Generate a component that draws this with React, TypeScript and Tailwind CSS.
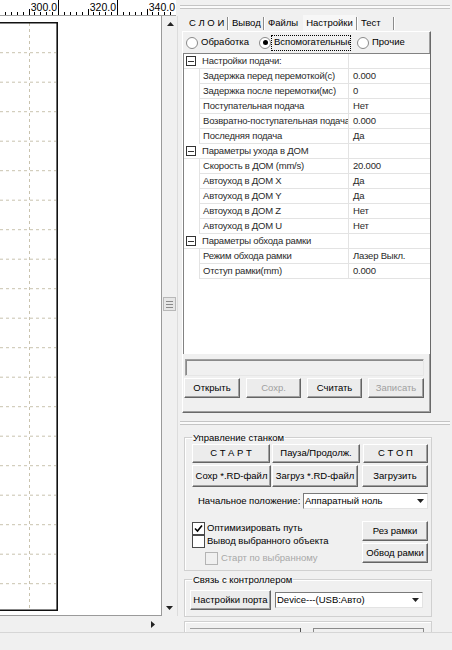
import React from "react";

const tree = [
  {
    title: "Настройки подачи:",
    rows: [
      ["Задержка перед перемоткой(с)", "0.000"],
      ["Задержка после перемотки(мс)", "0"],
      ["Поступательная подача", "Нет"],
      ["Возвратно-поступательная подача", "0.000"],
      ["Последняя подача", "Да"],
    ],
  },
  {
    title: "Параметры ухода в ДОМ",
    rows: [
      ["Скорость в ДОМ (mm/s)", "20.000"],
      ["Автоуход в ДОМ X", "Да"],
      ["Автоуход в ДОМ Y", "Да"],
      ["Автоуход в ДОМ Z", "Нет"],
      ["Автоуход в ДОМ U", "Нет"],
    ],
  },
  {
    title: "Параметры обхода рамки",
    rows: [
      ["Режим обхода рамки", "Лазер Выкл."],
      ["Отступ рамки(mm)", "0.000"],
    ],
  },
];

function Ruler() {
  const ticks = [];
  for (let v = 280; v <= 340; v += 2) {
    const x = Math.round(58 + (v - 300) * 2.95) + 0.5;
    const top = v % 20 === 0 ? 0 : v % 10 === 0 ? 9 : 12;
    ticks.push(
      <line key={v} x1={x} x2={x} y1={top} y2={16} stroke="#000" strokeWidth={1} />
    );
  }
  const labels = ["300.0", "320.0", "340.0"];
  return (
    <svg width="176" height="16" className="block bg-white">
      {ticks}
      {labels.map((l, i) => (
        <text
          key={l}
          x={57 + i * 59}
          y={11}
          textAnchor="end"
          fontSize="10.5"
          fontFamily="Liberation Sans, Arial, sans-serif"
          fill="#000"
          stroke="#fff"
          strokeWidth={2}
          paintOrder="stroke"
        >
          {l}
        </text>
      ))}
      <line x1={0} x2={176} y1={15.5} y2={15.5} stroke="#a0a0a0" />
    </svg>
  );
}

function Canvas() {
  const hLines = [];
  for (let k = 0; k <= 18; k++) {
    const y = 36.7 + k * 29.5;
    hLines.push(
      <line key={k} x1={0} x2={56} y1={y} y2={y} stroke="#c9c3ae" strokeDasharray="3 3" />
    );
  }
  return (
    <svg width="161" height="599" className="block">
      {hLines}
      <line x1={29.5} x2={29.5} y1={7} y2={594} stroke="#c9c3ae" strokeDasharray="3 3" />
      <path d="M0 6.8 H57.2 V594.2 H0" fill="none" stroke="#111" strokeWidth={1.6} />
    </svg>
  );
}

function Arrow({ dir }: { dir: "up" | "down" | "right" }) {
  const d =
    dir === "up" ? "M0 4 L3.5 0 L7 4 Z" : dir === "down" ? "M0 0 L7 0 L3.5 4 Z" : "M0 0 L4 3.5 L0 7 Z";
  const w = dir === "right" ? 4 : 7;
  const h = dir === "right" ? 7 : 4;
  return (
    <svg width={w} height={h} className="block">
      <path d={d} fill="#222" />
    </svg>
  );
}

function Btn({
  children,
  disabled,
  className = "",
}: {
  children: React.ReactNode;
  disabled?: boolean;
  className?: string;
}) {
  return (
    <div
      className={`shrink-0 flex items-center justify-center whitespace-nowrap border border-t-white border-l-white border-r-[#646464] border-b-[#646464] bg-[#ececec] shadow-[inset_-1px_-1px_0_#a0a0a0] ${
        disabled ? "text-[#a0a0a0]" : "text-black"
      } ${className}`}
    >
      {children}
    </div>
  );
}

function Combo({ text, className = "" }: { text: string; className?: string }) {
  return (
    <div
      className={`shrink-0 flex items-center bg-white border border-t-[#7a7a7a] border-l-[#7a7a7a] border-r-[#e3e3e3] border-b-[#e3e3e3] ${className}`}
    >
      <span className="flex-1 pl-[1px] whitespace-nowrap overflow-hidden">{text}</span>
      <div className="w-[14px] h-full flex items-center justify-center">
        <Arrow dir="down" />
      </div>
    </div>
  );
}

function Check({ checked, disabled }: { checked?: boolean; disabled?: boolean }) {
  return (
    <div
      className={`shrink-0 w-[13px] h-[13px] flex items-center justify-center border ${
        disabled ? "border-[#b4b4b4] bg-[#f0f0f0]" : "border-[#4a4a4a] bg-white"
      }`}
    >
      {checked && (
        <svg width="9" height="9" className="block">
          <path d="M1 4.5 L3.5 7 L8 1.5" fill="none" stroke="#000" strokeWidth={1.6} />
        </svg>
      )}
    </div>
  );
}

function Radio({ on }: { on?: boolean }) {
  return (
    <div className="w-[12px] h-[12px] rounded-full border border-[#8a8a8a] bg-white flex items-center justify-center shrink-0">
      {on && <div className="w-[5px] h-[5px] rounded-full bg-black" />}
    </div>
  );
}

function Sep() {
  return <div className="shrink-0 w-[2px] h-[13px] border-l border-[#8c8c8c] border-r border-r-white" />;
}

function LeftPane() {
  return (
    <div className="w-[178px] shrink-0 flex flex-col">
      <div className="h-[16px] shrink-0 flex">
        <Ruler />
      </div>
      <div className="flex flex-1">
        <div className="w-[162px] flex flex-col">
          <div className="flex-1 bg-white border-r border-b border-[#9a9a9a] overflow-hidden">
            <Canvas />
          </div>
          <div className="h-[16px] shrink-0 flex justify-end items-center pr-[7px]">
            <Arrow dir="right" />
          </div>
        </div>
        <div className="w-[16px] flex flex-col">
          <div className="flex-1 flex flex-col border-r border-[#dcdcdc]">
            <div className="h-[16px] shrink-0 flex items-center justify-center pl-[1px]">
              <Arrow dir="up" />
            </div>
            <div className="h-[265px] shrink-0" />
            <div className="h-[14px] shrink-0 mx-[1px] border border-[#b8b8b8] bg-[#e6e6e6] flex flex-col items-center justify-center gap-[2px]">
              <div className="w-[7px] h-[1px] bg-[#8a8a8a]" />
              <div className="w-[7px] h-[1px] bg-[#8a8a8a]" />
              <div className="w-[7px] h-[1px] bg-[#8a8a8a]" />
            </div>
            <div className="flex-1" />
            <div className="h-[16px] shrink-0 flex items-center justify-center">
              <Arrow dir="down" />
            </div>
          </div>
          <div className="h-[16px] shrink-0" />
        </div>
      </div>
    </div>
  );
}

function Tree() {
  return (
    <div className="shrink-0 h-[301px] bg-white border-t border-l border-[#828282] overflow-hidden text-[#2a2a2a] tracking-[-0.2px]">
      {tree.map((g) => (
        <div key={g.title}>
          <div className="flex h-[15px] border-b border-[#e3e3e3]">
            <div className="w-[15px] shrink-0 flex items-center pl-[2px]">
              <div className="w-[10px] h-[10px] border border-[#333] flex items-center justify-center">
                <div className="w-[6px] h-[1px] bg-[#333]" />
              </div>
            </div>
            <div className="w-[149px] shrink-0 pl-[3px] flex items-center whitespace-nowrap overflow-hidden">
              {g.title}
            </div>
            <div className="flex-1 border-l border-[#e3e3e3]" />
          </div>
          {g.rows.map(([label, value]) => (
            <div key={label} className="flex h-[15px]">
              <div className="w-[15px] shrink-0" />
              <div className="w-[149px] shrink-0 pl-[3px] flex items-center whitespace-nowrap overflow-hidden border-b border-l border-[#e3e3e3]">
                {label}
              </div>
              <div className="flex-1 pl-[4px] flex items-center whitespace-nowrap border-b border-l border-[#e3e3e3]">
                {value}
              </div>
            </div>
          ))}
        </div>
      ))}
    </div>
  );
}

function RightPane() {
  return (
    <div className="flex-1 flex flex-col overflow-hidden">
      {/* splitter */}
      <div className="shrink-0 h-[15px] pt-[5px] pl-[2px] pr-[2px]">
        <div className="h-[4px] border-y border-[#c4c4c4] bg-[#fafafa]" />
      </div>

      {/* tabs */}
      <div className="shrink-0 h-[16px] ml-[4px] flex items-center whitespace-nowrap">
        <span className="ml-[7px] w-[34px]">С Л О И</span>
        <div className="ml-[4px]">
          <Sep />
        </div>
        <span className="ml-[3px] w-[31px]">Вывод</span>
        <Sep />
        <span className="ml-[3px] w-[35px]">Файлы</span>
        <span className="w-[53px] h-[16px] flex items-center justify-center bg-[#f7f7f7]">Настройки</span>
        <Sep />
        <span className="ml-[3px] w-[32px]">Тест</span>
        <Sep />
      </div>

      {/* tab body */}
      <div className="shrink-0 ml-[4px] w-[249px] h-[382px] flex flex-col border border-t-white border-l-white border-r-[#696969] border-b-[#696969] shadow-[inset_-1px_-1px_0_#a0a0a0]">
        <div className="shrink-0 h-[21px] flex items-center">
          <div className="ml-[3px] w-[73px] shrink-0 flex items-center gap-[3px]">
            <Radio />
            <span>Обработка</span>
          </div>
          <Radio on />
          <div className="shrink-0 w-[80px] h-[16px] border border-dotted border-black flex items-center pl-[2px] whitespace-nowrap overflow-hidden">
            Вспомогательные
          </div>
          <div className="ml-[6px] flex items-center gap-[3px]">
            <Radio />
            <span>Прочие</span>
          </div>
        </div>
        <Tree />
        <div className="shrink-0 mt-[5px] ml-[2px] w-[239px] h-[17px] bg-[#f0f0f0] border border-t-[#a0a0a0] border-l-[#a0a0a0] border-r-[#e6e6e6] border-b-[#e6e6e6] shadow-[inset_1px_1px_0_#8a8a8a]" />
        <div className="shrink-0 mt-[2px] ml-[1px] flex gap-[6px]">
          <Btn className="w-[56px] h-[20px]">Открыть</Btn>
          <Btn disabled className="w-[55px] h-[20px]">Сохр.</Btn>
          <Btn className="w-[55px] h-[20px]">Считать</Btn>
          <Btn disabled className="w-[56px] h-[20px]">Записать</Btn>
        </div>
      </div>

      {/* splitter */}
      <div className="shrink-0 mt-[8px] mx-[2px] h-[4px] border-y border-[#c4c4c4] bg-[#fafafa]" />

      {/* machine control */}
      <fieldset className="shrink-0 mt-[6px] ml-[6px] w-[248px] border border-[#d0d0d0] shadow-[inset_1px_1px_0_#fff] pl-[7px] pr-[3px] pb-[5px]">
        <legend className="px-[1px] leading-[13px]">Управление станком</legend>
        <div className="flex h-[19px]">
          <Btn className="w-[78px]">С Т А Р Т</Btn>
          <Btn className="ml-[2px] w-[88px]">Пауза/Продолж.</Btn>
          <Btn className="ml-[3px] w-[65px]">С Т О П</Btn>
        </div>
        <div className="mt-[2px] flex h-[22px]">
          <Btn className="w-[79px]">Сохр *.RD-файл</Btn>
          <Btn className="ml-[1px] w-[86px]">Загруз *.RD-файл</Btn>
          <Btn className="ml-[4px] w-[66px]">Загрузить</Btn>
        </div>
        <div className="mt-[6px] flex items-center h-[16px]">
          <span className="ml-[6px] w-[105px] shrink-0 whitespace-nowrap">Начальное положение:</span>
          <Combo text="Аппаратный ноль" className="w-[125px] h-[16px]" />
        </div>
        <div className="mt-[12px] flex">
          <div className="flex-1 flex flex-col">
            <div className="mt-[1px] h-[13px] flex items-center gap-[2px]">
              <Check checked />
              <span className="whitespace-nowrap">Оптимизировать путь</span>
            </div>
            <div className="h-[13px] flex items-center gap-[2px]">
              <Check />
              <span className="whitespace-nowrap">Вывод выбранного объекта</span>
            </div>
            <div className="mt-[4px] ml-[13px] h-[13px] flex items-center gap-[3px]">
              <Check disabled />
              <span className="whitespace-nowrap text-[#a8a8a8]">Старт по выбранному</span>
            </div>
          </div>
          <div className="w-[66px] shrink-0 flex flex-col gap-[2px]">
            <Btn className="h-[20px]">Рез рамки</Btn>
            <Btn className="h-[20px]">Обвод рамки</Btn>
          </div>
        </div>
      </fieldset>

      {/* controller link */}
      <fieldset className="shrink-0 mt-[2px] ml-[6px] w-[248px] border border-[#d0d0d0] shadow-[inset_1px_1px_0_#fff] pl-[5px] pb-[6px]">
        <legend className="ml-[2px] px-[1px] leading-[13px]">Связь с контроллером</legend>
        <div className="mt-[4px] flex items-center">
          <Btn className="w-[81px] h-[20px]">Настройки порта</Btn>
          <Combo text="Device---(USB:Авто)" className="ml-[4px] w-[148px] h-[16px]" />
        </div>
      </fieldset>

      {/* next group (cut off) */}
      <div className="shrink-0 mt-[4px] ml-[6px] w-[248px] h-[20px] border border-[#d0d0d0] shadow-[inset_1px_1px_0_#fff] flex items-start pt-[6px] pl-[5px]">
        <div className="w-[110px] h-[3px] border-t border-[#a0a0a0]" />
        <div className="w-[1px] h-[4px] bg-[#555]" />
        <div className="ml-[12px] w-[111px] h-[6px] border-t border-l border-r border-[#8a8a8a]" />
      </div>
    </div>
  );
}

export default function App() {
  return (
    <div className="w-[452px] h-[650px] bg-[#f0f0f0] flex flex-col overflow-hidden text-[9.5px] text-black font-['Liberation_Sans',Arial,sans-serif]">
      <div className="flex h-[632px] shrink-0">
        <LeftPane />
        <RightPane />
      </div>
      <div className="flex-1 border-t border-[#d6d6d6]" />
    </div>
  );
}
